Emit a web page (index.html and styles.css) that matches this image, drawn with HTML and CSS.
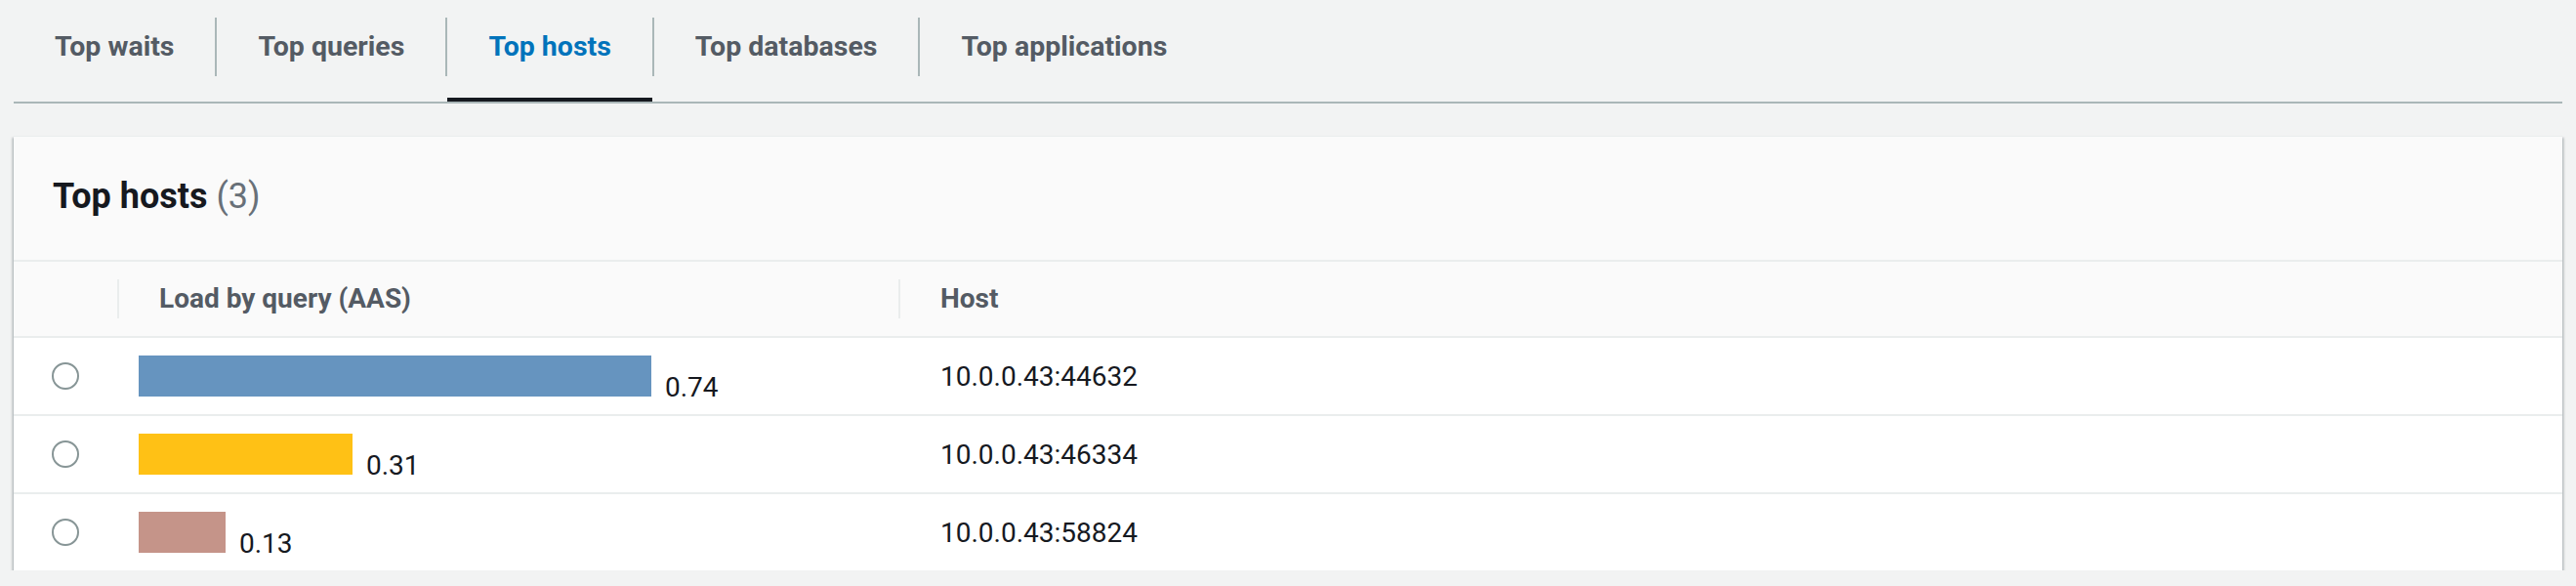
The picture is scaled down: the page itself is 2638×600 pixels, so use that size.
FILE: index.html
```html
<!DOCTYPE html>
<html lang="en">
<head>
    <meta charset="UTF-8">
    <meta name="viewport" content="width=device-width, initial-scale=1.0">
    <title>Top hosts</title>
    <link rel="stylesheet" href="styles.css">
</head>
<body>
    <div class="page">
        <ul class="tabs">
            <li class="tab">Top waits</li>
            <li class="sep"></li>
            <li class="tab">Top queries</li>
            <li class="sep"></li>
            <li class="tab active">Top hosts</li>
            <li class="sep"></li>
            <li class="tab">Top databases</li>
            <li class="sep"></li>
            <li class="tab">Top applications</li>
        </ul>

        <div class="panel">
            <div class="panel-header">
                <h2 class="title">Top hosts <span class="count">(3)</span></h2>
            </div>
            <div class="table">
                <div class="row head">
                    <div class="cell"></div>
                    <div class="cell"><span class="th">Load by query (AAS)</span></div>
                    <div class="cell"><span class="th">Host</span></div>
                </div>
                <div class="row">
                    <div class="cell radio-cell"><span class="radio"></span></div>
                    <div class="cell load">
                        <div class="bar-wrap">
                            <span class="bar blue" style="width: 525px"></span>
                            <span class="value">0.74</span>
                        </div>
                    </div>
                    <div class="cell host">10.0.0.43:44632</div>
                </div>
                <div class="row">
                    <div class="cell radio-cell"><span class="radio"></span></div>
                    <div class="cell load">
                        <div class="bar-wrap">
                            <span class="bar yellow" style="width: 219px"></span>
                            <span class="value">0.31</span>
                        </div>
                    </div>
                    <div class="cell host">10.0.0.43:46334</div>
                </div>
                <div class="row">
                    <div class="cell radio-cell"><span class="radio"></span></div>
                    <div class="cell load">
                        <div class="bar-wrap">
                            <span class="bar rose" style="width: 89px"></span>
                            <span class="value">0.13</span>
                        </div>
                    </div>
                    <div class="cell host">10.0.0.43:58824</div>
                </div>
            </div>
        </div>
    </div>
</body>
</html>
```

FILE: styles.css
```css
body {
    margin: 0;
    background-color: #f2f3f3;
    font-family: Roboto, "Liberation Sans", Arial, sans-serif;
    color: #16191f;
}
.page {
    padding: 0 14px;
}
.tabs {
    display: flex;
    list-style: none;
    margin: 0;
    padding: 0;
    border-bottom: 2px solid #aab7b8;
}
.tab {
    padding: 18px 42px 22px;
    line-height: 60px;
    font-size: 28.5px;
    font-weight: bold;
    color: #545b64;
    border-bottom: 4px solid transparent;
}
.tab.active {
    color: #0073bb;
    border-bottom-color: #16191f;
}
.sep {
    width: 2px;
    height: 60px;
    margin-top: 18px;
    background-color: #aab7b8;
}
.panel {
    margin-top: 33px;
    background-color: white;
    box-shadow: 0 2px 2px 0 rgba(0, 28, 36, 0.3), 2px 2px 2px 0 rgba(0, 28, 36, 0.15), -2px 2px 2px 0 rgba(0, 28, 36, 0.15);
    border-top: 1px solid #eaeded;
}
.panel-header {
    background-color: #fafafa;
    padding: 39px 40px 43px;
    border-bottom: 2px solid #eaeded;
}
.title {
    margin: 0;
    font-size: 36px;
    line-height: 44px;
    font-weight: bold;
}
.count {
    font-weight: normal;
    color: #687078;
}
.row {
    display: grid;
    grid-template-columns: 106px 800px 1fr;
    height: 78px;
    border-bottom: 2px solid #eaeded;
}
.row:last-child {
    border-bottom: none;
}
.row.head {
    height: 76px;
    background-color: #fafafa;
}
.cell {
    display: flex;
    align-items: center;
    font-size: 28px;
}
.th {
    display: block;
    height: 40px;
    line-height: 40px;
    padding-left: 41px;
    border-left: 2px solid #eaeded;
    font-weight: bold;
    color: #545b64;
}
.radio-cell {
    justify-content: center;
}
.radio {
    width: 24px;
    height: 24px;
    border: 2px solid #879596;
    border-radius: 50%;
    background-color: white;
}
.load {
    padding-left: 22px;
}
.bar-wrap {
    display: flex;
    align-items: baseline;
}
.bar {
    display: block;
    height: 42px;
    flex-shrink: 0;
}
.value {
    margin-left: 14px;
    line-height: 28px;
    margin-bottom: -4px;
}
.bar.blue { background-color: #6694bf; }
.bar.yellow { background-color: #ffc115; }
.bar.rose { background-color: #c59489; }
.host {
    padding-left: 43px;
}
```
